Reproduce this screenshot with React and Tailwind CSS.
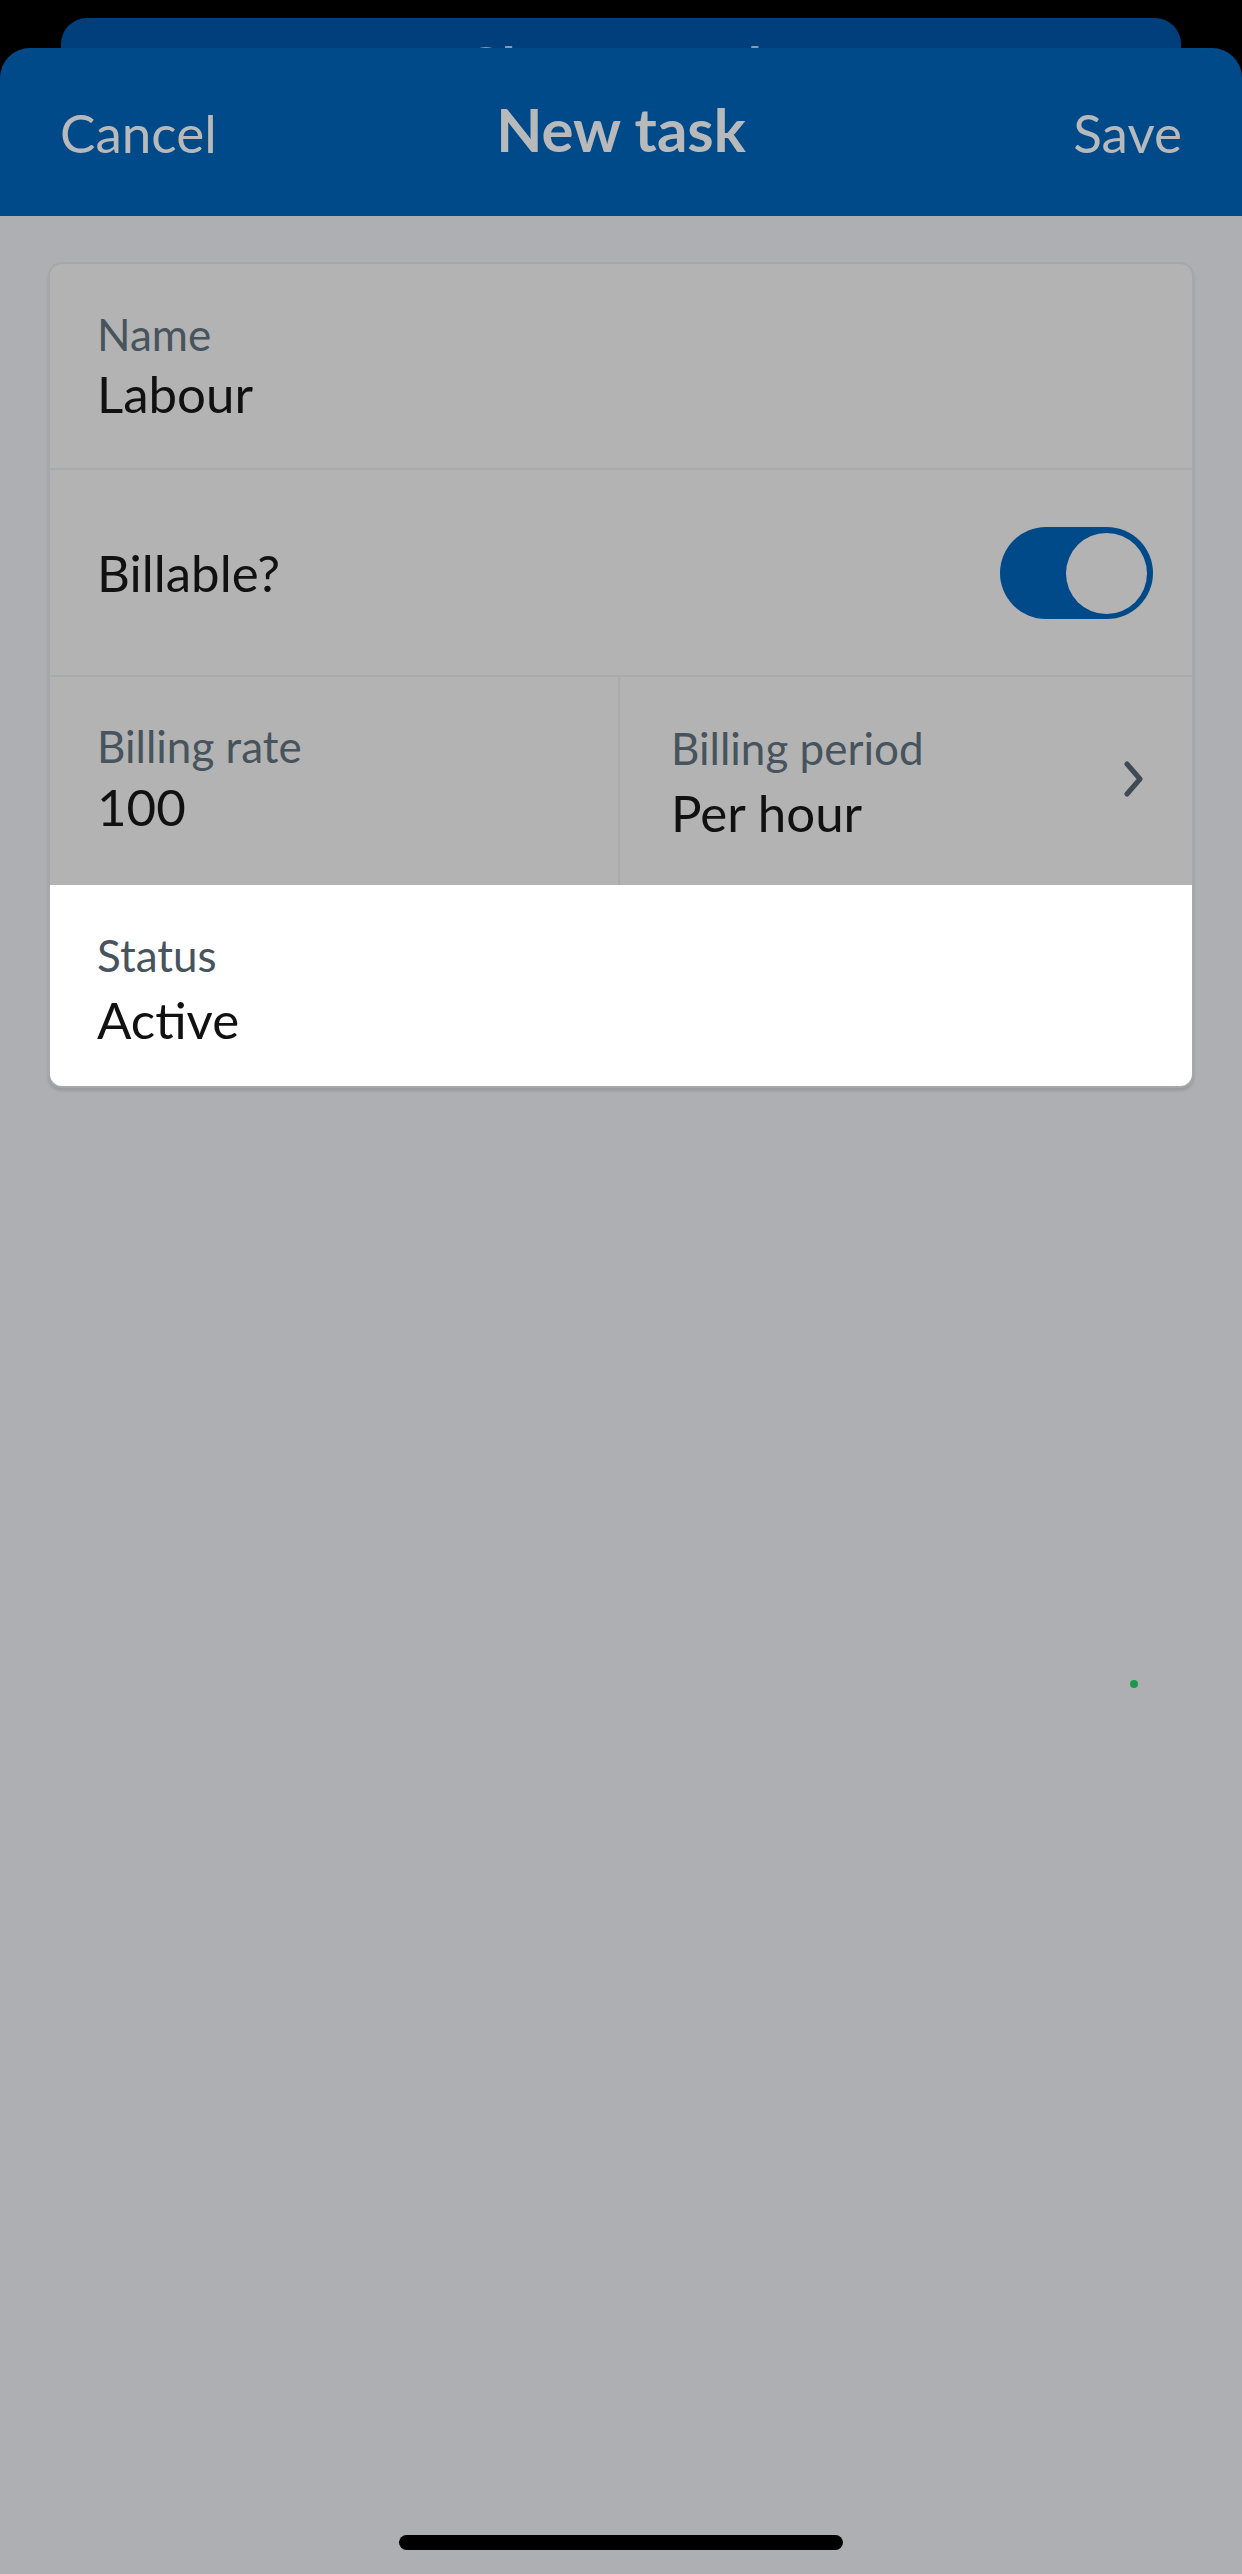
import React, { useState } from 'react';

const Label = ({ children }) => (
    <div className="text-[44px] leading-[48px] text-[#47535d]">{children}</div>
);

const Value = ({ children }) => (
    <div className="text-[51px] leading-[56px] text-[#111111]">{children}</div>
);

const Toggle = ({ on, onChange }) => (
    <button
        onClick={() => onChange(!on)}
        className={`relative w-[153px] h-[92px] rounded-full ${on ? 'bg-[#014a89]' : 'bg-[#9a9b9e]'}`}
    >
        <span
            className={`absolute top-[6px] w-[81px] h-[81px] rounded-full bg-[#b3b3b3] ${on ? 'right-[6px]' : 'left-[6px]'}`}
        />
    </button>
);

const App = () => {
    const [billable, setBillable] = useState(true);

    return (
        <div className="relative w-[1242px] h-[2574px] overflow-hidden bg-[#aeafb3] font-['Lato','Noto_Sans',sans-serif]">
            {/* sheet stack at the top */}
            <div className="bg-black pt-[18px]">
                <div className="mx-[61px] h-[60px] rounded-t-[26px] bg-[#003f7b] overflow-hidden flex justify-center">
                    <span className="mt-[20px] text-[58px] leading-none font-bold text-[#8a99ad]">Choose task</span>
                </div>
                <div className="relative -mt-[30px] h-[168px] rounded-t-[30px] bg-[#014a89] flex items-center justify-between px-[60px] text-[#b8b9bb]">
                    <button className="text-[53px] leading-none">Cancel</button>
                    <h1 className="absolute left-0 right-0 text-center text-[60px] leading-none font-bold -mt-[6px] pointer-events-none">New task</h1>
                    <button className="text-[53px] leading-none">Save</button>
                </div>
            </div>

            {/* form card */}
            <div className="mx-[48px] mt-[46px] rounded-[14px] border-2 border-[#a6a7aa] bg-[#b3b3b3] overflow-hidden shadow-[0_3px_3px_rgba(0,0,0,0.12)]">
                <div className="pl-[47px] pr-[40px] pt-[46px] pb-[46px] flex flex-col gap-[8px]">
                    <Label>Name</Label>
                    <Value>Labour</Value>
                </div>

                <div className="border-t-2 border-[#a9aaae] h-[207px] pl-[47px] pr-[39px] flex items-center justify-between">
                    <Value>Billable?</Value>
                    <Toggle on={billable} onChange={setBillable} />
                </div>

                <div className="border-t-2 border-[#a9aaae] flex h-[210px]">
                    <div className="w-[570px] pl-[47px] pt-[45px] flex flex-col gap-[9px] border-r-2 border-[#a9aaae]">
                        <Label>Billing rate</Label>
                        <Value>100</Value>
                    </div>
                    <div className="flex-1 pl-[51px] pr-[46px] pt-[47px] flex items-start justify-between">
                        <div className="flex flex-col gap-[13px]">
                            <Label>Billing period</Label>
                            <Value>Per hour</Value>
                        </div>
                        <svg className="mt-[36px]" width="24" height="38" viewBox="0 0 24 38" fill="none">
                            <path d="M5 4 L18 19 L5 34" stroke="#3f4a54" strokeWidth="5" strokeLinecap="round" strokeLinejoin="round" />
                        </svg>
                    </div>
                </div>

                <div className="bg-white pl-[47px] pt-[46px] pb-[38px] flex flex-col gap-[13px]">
                    <Label>Status</Label>
                    <Value>Active</Value>
                </div>
            </div>

            {/* stray indicator dot */}
            <span className="absolute left-[1130px] top-[1680px] w-[8px] h-[8px] rounded-full bg-[#1a9a48]" />

            {/* home indicator */}
            <span className="absolute left-[399px] top-[2535px] w-[444px] h-[15px] rounded-full bg-black" />
        </div>
    );
};

export default App;
